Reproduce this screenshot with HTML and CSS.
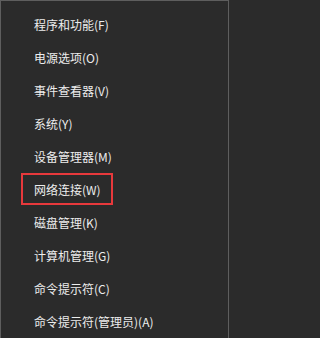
FILE: index.html
```html
<!DOCTYPE html>
<html lang="zh-CN">
<head>
<meta charset="utf-8">
<link rel="stylesheet" href="styles.css">
</head>
<body>
<ul class="menu">
  <li class="item">程序和功能(F)</li>
  <li class="item">电源选项(O)</li>
  <li class="item">事件查看器(V)</li>
  <li class="item">系统(Y)</li>
  <li class="item">设备管理器(M)</li>
  <li class="item item-marked">网络连接(W)<span class="mark"></span></li>
  <li class="item">磁盘管理(K)</li>
  <li class="item">计算机管理(G)</li>
  <li class="item">命令提示符(C)</li>
  <li class="item">命令提示符(管理员)(A)</li>
</ul>
</body>
</html>
```
FILE: styles.css
```css
html, body {
  margin: 0;
  padding: 0;
  background: #2b2b2b;
}
.menu {
  list-style: none;
  margin: 0;
  width: 229px;
  height: 338px;
  box-sizing: border-box;
  padding: 7px 0 0 0;
  background: #2b2b2b;
  border-top: 1px solid #5e5e5e;
  border-left: 1px solid #5e5e5e;
  border-right: 1px solid #5e5e5e;
  overflow: hidden;
}
.item {
  height: 33px;
  line-height: 33px;
  padding-left: 33px;
  color: #ededed;
  font-family: "Noto Sans CJK SC", "Noto Sans", sans-serif;
  font-size: 12px;
  white-space: nowrap;
}
.item-marked {
  position: relative;
}
.mark {
  position: absolute;
  left: 20px;
  top: 0;
  width: 92px;
  height: 32px;
  box-sizing: border-box;
  border: 2px solid #e8393c;
}
```
